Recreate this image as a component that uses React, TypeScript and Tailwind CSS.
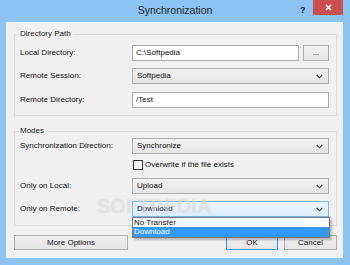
import React from 'react';

const Chevron = () => (
    <svg width="7" height="5" viewBox="0 0 7 5" className="shrink-0">
        <path d="M0.8 1 L3.5 3.8 L6.2 1" fill="none" stroke="#4a4a4a" strokeWidth="1.1" />
    </svg>
);

const Select: React.FC<{ value: string; focused?: boolean; children?: React.ReactNode }> = ({ value, focused, children }) => (
    <div
        className={`relative flex h-[16px] w-[197px] items-center justify-between border pl-[4px] pr-[5px] ${
            focused
                ? 'border-[#7eb4ea] bg-linear-to-b from-[#ecf4fc] to-[#dcecfc]'
                : 'border-[#acacac] bg-linear-to-b from-[#f2f2f2] to-[#e5e5e5]'
        }`}
    >
        <span>{value}</span>
        <Chevron />
        {children}
    </div>
);

const Row: React.FC<{ label: string; className?: string; children: React.ReactNode }> = ({ label, className, children }) => (
    <div className={`flex h-[16px] items-center ${className || ''}`}>
        <span className="w-[112px] shrink-0">{label}</span>
        {children}
    </div>
);

const Group: React.FC<{ title: string; className?: string; children: React.ReactNode }> = ({ title, className, children }) => (
    <div className={`relative w-[323px] border border-[#dcdcdc] pl-[5px] pr-[7px] ${className || ''}`}>
        <span className="absolute left-[5px] top-[-6px] bg-[#f0f0f0] pr-[2px] leading-[10px] text-[#1a1a1a]">{title}</span>
        {children}
    </div>
);

const Button: React.FC<{ label: string; className?: string }> = ({ label, className }) => (
    <div className={`flex h-[15px] items-center justify-center border bg-linear-to-b from-[#f0f0f0] to-[#e5e5e5] ${className || ''}`}>
        {label}
    </div>
);

export default function App() {
    return (
        <div className="flex h-[265px] w-[350px] flex-col bg-[#8bc4f2] font-['Liberation_Sans',Arial,sans-serif] text-[8px] text-[#111]">
            {/* Title bar */}
            <div className="relative flex h-[22px] shrink-0 items-center justify-center">
                <span className="text-[10.5px] text-[#222]">Synchronization</span>
                <span className="absolute left-[300px] top-[4px] text-[9px] font-bold text-[#222]">?</span>
                <div className="absolute left-[313px] top-0 flex h-[15px] w-[30px] items-center justify-center bg-[#c9504e]">
                    <svg width="7" height="7" viewBox="0 0 7 7">
                        <path d="M1 1 L6 6 M6 1 L1 6" stroke="#fff" strokeWidth="1.6" />
                    </svg>
                </div>
            </div>

            {/* Dialog body */}
            <div className="relative mb-[7px] ml-[6px] mr-[7px] flex flex-1 flex-col bg-[#f0f0f0] pl-[8px] pt-[12px]">
                <Group title="Directory Path" className="pb-[7px] pt-[10px]">
                    <Row label="Local Directory:">
                        <div className="flex h-[16px] w-[167px] items-center border border-[#acacac] bg-white pl-[3px]">C:\Softpedia</div>
                        <Button label="..." className="ml-[4px] h-[16px] w-[26px] border-[#adadad]" />
                    </Row>
                    <Row label="Remote Session:" className="mt-[7px]">
                        <Select value="Softpedia" />
                    </Row>
                    <Row label="Remote Directory:" className="mt-[8px]">
                        <div className="flex h-[16px] w-[197px] items-center border border-[#acacac] bg-white pl-[3px]">/Test</div>
                    </Row>
                </Group>

                <Group title="Modes" className="mt-[15px] pb-[8px] pt-[6px]">
                    <Row label="Synchronization Direction:">
                        <Select value="Synchronize" />
                    </Row>
                    <div className="mt-[6px] flex h-[10px] items-center pl-[113px]">
                        <div className="h-[10px] w-[10px] border border-[#333] bg-white" />
                        <span className="ml-[2px]">Overwrite if the file exists</span>
                    </div>
                    <Row label="Only on Local:" className="mt-[8px]">
                        <Select value="Upload" />
                    </Row>
                    <Row label="Only on Remote:" className="mt-[7px]">
                        <Select value="Download" focused>
                            <div className="absolute left-[-1px] top-[15px] z-10 w-[198px] border border-[#7a7a7a] bg-white shadow-[2px_2px_2px_rgba(0,0,0,0.25)]">
                                <div className="flex h-[9px] items-center pl-[1px]">No Transfer</div>
                                <div className="flex h-[10px] items-center bg-[#3399ff] pl-[1px] text-white">Download</div>
                            </div>
                        </Select>
                    </Row>
                </Group>

                <div className="mt-[9px] flex w-[323px] items-center">
                    <Button label="More Options" className="w-[114px] border-[#adadad]" />
                    <div className="flex-1" />
                    <Button label="OK" className="w-[52px] border-[#3399ff]" />
                    <Button label="Cancel" className="ml-[6px] w-[53px] border-[#adadad]" />
                </div>

                {/* watermark */}
                <span className="pointer-events-none absolute left-[91px] top-[174px] z-20 text-[20px] font-bold leading-none text-white/45 [text-shadow:0_0_1px_rgba(120,120,120,0.3)]">
                    SOFTPEDIA
                </span>
            </div>
        </div>
    );
}
